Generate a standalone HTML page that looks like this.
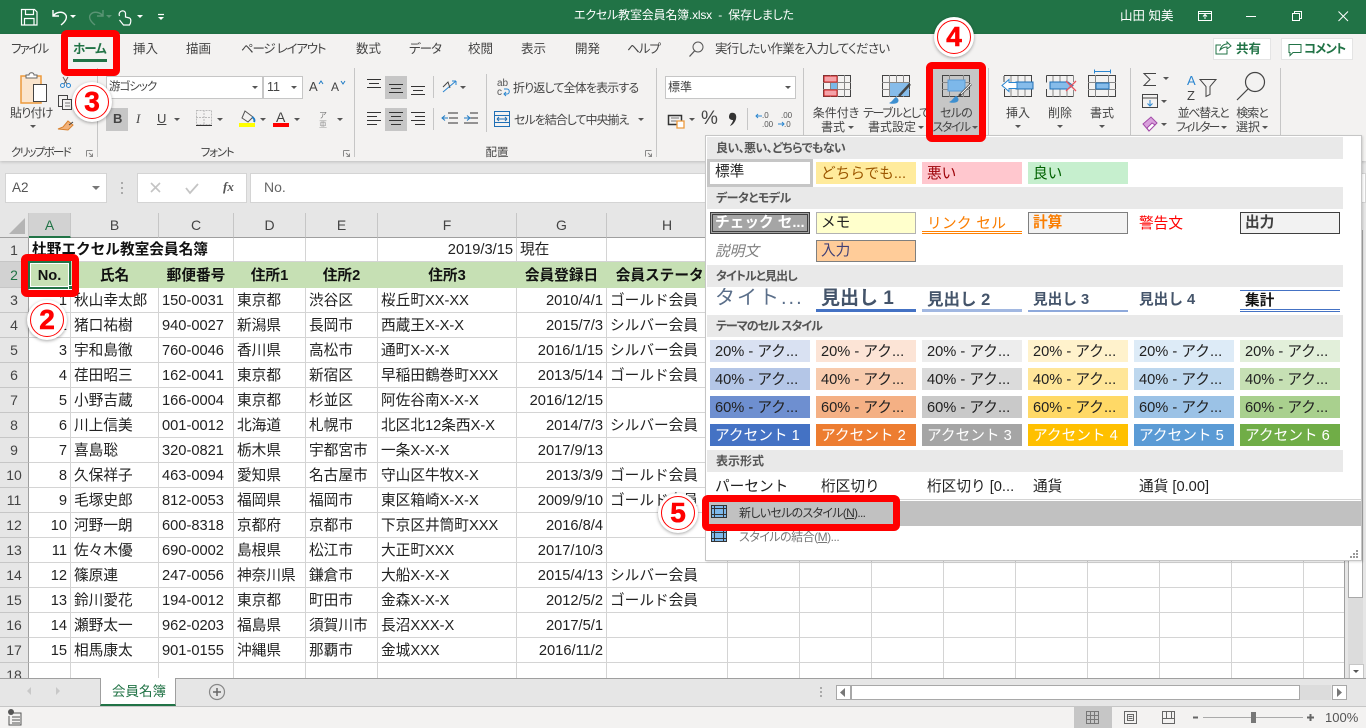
<!DOCTYPE html>
<html lang="ja"><head><meta charset="utf-8"><title>エクセル教室会員名簿.xlsx</title>
<style>
*{box-sizing:border-box}
html,body{margin:0;padding:0;width:1366px;height:728px;overflow:hidden;background:#e6e6e6}
body{position:relative;font-family:"Liberation Sans","Noto Sans CJK JP",sans-serif;color:#222}
.a{position:absolute}
.t{position:absolute;white-space:nowrap;font-size:12px;line-height:16px;color:#444;font-feature-settings:"palt"}
.c{transform:translateX(-50%)}
.arr{position:absolute;width:0;height:0;border-left:3.5px solid transparent;border-right:3.5px solid transparent;border-top:3.5px solid #555}
.sep{position:absolute;top:68px;height:89px;width:1px;background:#c6c6c6}
.s2{position:absolute;width:1px;background:#c6c6c6}
.box{position:absolute;background:#fff;border:1px solid #c6c6c6}
.gray{position:absolute;background:#c6c6c6}
#sheet{position:absolute;left:0;top:213px;width:1345px;height:465px;overflow:hidden;background:#fff}
table{border-collapse:separate;border-spacing:0;table-layout:fixed;width:1345px}
td{border-right:1px solid #d4d4d4;border-bottom:1px solid #d4d4d4;padding:2px 3px 0;font-size:14.67px;white-space:nowrap;overflow:visible;color:#222;line-height:16px}
tr:nth-child(1) td,tr:nth-child(2) td{padding-top:0}
td.h{background:#e6e6e6;border-right:1px solid #c6c6c6;border-bottom:1px solid #9f9f9f;text-align:center;color:#444;font-size:14px}
td.rh{background:#e6e6e6;border-right:1px solid #9f9f9f;border-bottom:1px solid #c6c6c6;text-align:center;color:#444;padding:0;font-size:14px}
td.n{text-align:right}
tr.g td.x{background:#c6e0b4;font-weight:bold;text-align:center;color:#111;border-color:#c6e0b4}
#pop{position:absolute;left:705px;top:135px;width:657px;height:426px;background:#fff;border:1px solid #c6c6c6;box-shadow:1px 1px 2px rgba(0,0,0,.15)}
.hd{position:absolute;left:707px;width:636px;height:22px;background:#e9e9e9;font-size:12px;font-weight:bold;color:#555;line-height:22px;padding-left:9px;font-feature-settings:"palt"}
.st{position:absolute;width:100px;height:22px;font-size:14.67px;line-height:24px;padding-left:5px;white-space:nowrap;overflow:hidden;color:#222}
.bd{line-height:20px;padding-left:4px}
.red{position:absolute;border:7px solid #f00;border-radius:6px}
.num{position:absolute;width:40px;height:40px;border-radius:50%;background:#fff;box-shadow:0 1px 3px rgba(0,0,0,.35)}
.num i{position:absolute;left:3px;top:3px;width:34px;height:34px;border-radius:50%;border:1.5px solid #f00;font:bold 28px/31px "Liberation Sans",sans-serif;color:#f00;text-align:center;-webkit-text-stroke:.6px #f00}
</style></head><body>

<!-- title bar -->
<div class="a" style="left:0;top:0;width:1366px;height:34px;background:#217346"></div>
<div class="t" style="left:574px;top:7px;color:#fff;font-size:12px;letter-spacing:-.2px">エクセル教室会員名簿.xlsx &nbsp;-&nbsp; 保存しました</div>
<div class="t" style="left:1120px;top:8px;color:#fff;font-size:12.5px">山田 知美</div>

<!-- ribbon -->
<div class="a" style="left:0;top:34px;width:1366px;height:127px;background:#f3f2f1;box-shadow:0 1px 3px rgba(0,0,0,.18)"></div>
<div class="t" style="left:11px;top:41px;font-size:12.5px;letter-spacing:-1.7px">ファイル</div>
<div class="t" style="left:73px;top:41px;font-size:12.5px;font-weight:bold;color:#217346;letter-spacing:-1px">ホーム</div>
<div class="a" style="left:73px;top:59px;width:34px;height:3px;background:#217346"></div>
<div class="t" style="left:133px;top:41px;font-size:12.5px">挿入</div>
<div class="t" style="left:186px;top:41px;font-size:12.5px">描画</div>
<div class="t" style="left:241px;top:41px;font-size:12.5px;letter-spacing:-1.2px">ページ レイアウト</div>
<div class="t" style="left:356px;top:41px;font-size:12.5px">数式</div>
<div class="t" style="left:409px;top:41px;font-size:12.5px;letter-spacing:-1px">データ</div>
<div class="t" style="left:468px;top:41px;font-size:12.5px">校閲</div>
<div class="t" style="left:521px;top:41px;font-size:12.5px">表示</div>
<div class="t" style="left:575px;top:41px;font-size:12.5px">開発</div>
<div class="t" style="left:627px;top:41px;font-size:12.5px;letter-spacing:-1px">ヘルプ</div>
<div class="t" style="left:715px;top:41px;font-size:12.5px;letter-spacing:-.75px">実行したい作業を入力してください</div>

<div class="a" style="left:1213px;top:38px;width:58px;height:22px;background:#fff;border:1px solid #e4e4e4"></div>
<div class="t" style="left:1236px;top:41px;font-size:12.5px;font-weight:bold;color:#217346">共有</div>
<div class="a" style="left:1281px;top:38px;width:72px;height:22px;background:#fff;border:1px solid #e4e4e4"></div>
<div class="t" style="left:1304px;top:41px;font-size:12.5px;font-weight:bold;color:#217346;letter-spacing:-1px">コメント</div>

<div class="sep" style="left:97px"></div><div class="sep" style="left:354px"></div><div class="sep" style="left:656px"></div><div class="sep" style="left:803px"></div><div class="sep" style="left:988px"></div><div class="sep" style="left:1130px"></div><div class="sep" style="left:1280px"></div>

<!-- clipboard -->
<div class="t" style="left:10px;top:105px;letter-spacing:-.8px">貼り付け</div><div class="arr" style="left:30px;top:125px"></div>
<div class="t" style="left:11px;top:145px;font-size:11.5px;letter-spacing:-1.7px">クリップボード</div>

<!-- font -->
<div class="box" style="left:106px;top:76px;width:157px;height:23px"></div>
<div class="t" style="left:109px;top:79px;font-size:11.5px;letter-spacing:-1px">游ゴシック</div><div class="arr" style="left:252px;top:86px"></div>
<div class="box" style="left:263px;top:76px;width:40px;height:23px"></div>
<div class="t" style="left:267px;top:79px;font-size:12.5px">11</div><div class="arr" style="left:291px;top:86px"></div>
<div class="t" style="left:309px;top:79px;font-size:13px">A</div><div class="t" style="left:331px;top:79px;font-size:12px">A</div>
<div class="gray" style="left:106px;top:108px;width:22px;height:23px"></div>
<div class="t" style="left:113px;top:111px;font-size:13px;font-weight:bold">B</div>
<div class="t" style="left:136px;top:111px;font-size:13px;font-style:italic;font-family:'Liberation Serif',serif">I</div>
<div class="t" style="left:157px;top:111px;font-size:13px;text-decoration:underline">U</div>
<div class="arr" style="left:174px;top:118px"></div><div class="arr" style="left:217px;top:118px"></div><div class="arr" style="left:260px;top:118px"></div><div class="arr" style="left:294px;top:118px"></div><div class="arr" style="left:337px;top:118px"></div>
<div class="a" style="left:239px;top:123px;width:16px;height:4px;background:#ff0"></div>
<div class="t" style="left:276px;top:109px;font-size:14px">A</div>
<div class="a" style="left:273px;top:123px;width:16px;height:4px;background:#f00"></div>
<div class="t c" style="left:217px;top:145px;font-size:11.5px;letter-spacing:-1.3px">フォント</div>

<!-- alignment -->
<div class="gray" style="left:385px;top:76px;width:22px;height:23px"></div>
<div class="gray" style="left:385px;top:108px;width:22px;height:23px"></div>
<div class="s2" style="left:433px;top:76px;height:22px"></div><div class="s2" style="left:433px;top:108px;height:22px"></div>
<div class="s2" style="left:486px;top:74px;height:58px"></div>
<div class="t" style="left:513px;top:80px;letter-spacing:-.85px">折り返して全体を表示する</div>
<div class="t" style="left:514px;top:112px;letter-spacing:-1px">セルを結合して中央揃え</div><div class="arr" style="left:638px;top:118px"></div><div class="arr" style="left:460px;top:86px"></div>
<div class="t c" style="left:497px;top:145px;font-size:11.5px">配置</div>

<!-- number -->
<div class="box" style="left:665px;top:76px;width:131px;height:23px"></div>
<div class="t" style="left:668px;top:79px">標準</div><div class="arr" style="left:785px;top:86px"></div>
<div class="arr" style="left:689px;top:118px"></div>
<div class="t" style="left:701px;top:111px;font-size:19px;line-height:16px">%</div>
<div class="s2" style="left:747px;top:108px;height:22px"></div>

<!-- styles -->
<div class="t c" style="left:836px;top:105px">条件付き</div>
<div class="t c" style="left:833px;top:119px">書式</div><div class="arr" style="left:848px;top:126px"></div>
<div class="t c" style="left:896px;top:105px;letter-spacing:-1.3px">テーブルとして</div>
<div class="t c" style="left:892px;top:119px">書式設定</div><div class="arr" style="left:918px;top:126px"></div>
<div class="gray" style="left:933px;top:69px;width:46px;height:66px"></div>
<div class="t c" style="left:956px;top:105px;letter-spacing:-.8px">セルの</div>
<div class="t c" style="left:951px;top:119px;letter-spacing:-1.5px">スタイル</div><div class="arr" style="left:972px;top:126px"></div>

<!-- cells -->
<div class="t c" style="left:1018px;top:105px">挿入</div><div class="arr" style="left:1015px;top:125px"></div>
<div class="t c" style="left:1060px;top:105px">削除</div><div class="arr" style="left:1057px;top:125px"></div>
<div class="t c" style="left:1102px;top:105px">書式</div><div class="arr" style="left:1099px;top:125px"></div>

<!-- editing -->
<div class="arr" style="left:1163px;top:77px"></div><div class="arr" style="left:1161px;top:100px"></div><div class="arr" style="left:1161px;top:123px"></div>
<div class="t c" style="left:1203px;top:105px;letter-spacing:-1.4px">並べ替えと</div>
<div class="t c" style="left:1197px;top:119px;letter-spacing:-2px">フィルター</div><div class="arr" style="left:1221px;top:126px"></div>
<div class="t c" style="left:1252px;top:105px;letter-spacing:-1px">検索と</div>
<div class="t c" style="left:1248px;top:119px">選択</div><div class="arr" style="left:1262px;top:126px"></div>

<!-- ribbon icons -->
<svg class="a" style="left:0;top:0" width="1366" height="161" viewBox="0 0 1366 161" fill="none">
 <!-- QAT -->
 <g stroke="#fff" stroke-width="1.2">
  <path d="M21.5 9.5h13l2.5 2.5v13h-15.500zM25.500 9.500v5h8v-5M24.500 25v-6.500h9.500v6.500"/>
  <path d="M53 10v6h6M53 16c3-4 9-5 12-2 3 3 1 7-4 11" stroke-width="1.400"/>
  <path d="M119.500 16c-2-5 5-7 6-3v4l4 1c2 1 1.500 5 0 7h-6l-4-5" stroke-width="1.200"/>
  <path d="M158 14.500h6" stroke-width="1.200"/>
 </g>
 <path d="M158 17h6l-3 3z" fill="#fff"/>
 <path d="M103 10v6h-6M103 16c-3-4-9-5-12-2-3 3-1 7 4 11" stroke="#5a9474" stroke-width="1.400"/>
 <path d="M70 15h6l-3 3zM137 15h6l-3 3z" fill="#fff"/>
 <path d="M106 15h6l-3 3z" fill="#5a9474"/>
 <!-- window -->
 <g stroke="#fff" stroke-width="1">
  <path d="M1198.500 11.500h13v9h-13zM1198.500 13.500h13M1205 19v-4M1203 16.500l2-2 2 2"/>
  <path d="M1246 16.500h10"/>
  <path d="M1292.500 13.500h7v7h-7zM1294.500 13.500v-2h7v7h-2"/>
  <path d="M1338.500 11.500l9.500 9.500M1348 11.500l-9.500 9.500"/>
 </g>
 <!-- tell me -->
 <circle cx="698" cy="47" r="5" stroke="#555"/><path d="M694.500 51l-5 5.500" stroke="#555" stroke-width="1.300"/>
 <!-- share/comment -->
 <path d="M1221 45h-5v9h11v-4M1220 50c1-4 4-6 7-6v-2l4 4-4 3v-2c-3 0-5 1-7 3z" stroke="#217346"/>
 <path d="M1289 44.500h12v8h-8l-3 3v-3h-1z" stroke="#217346"/>
 <!-- paste -->
 <path d="M21 76h20v27h-20z" stroke="#ed9a3c" stroke-width="1.500" fill="#fbe5cd"/>
 <path d="M26 77v-2h3c0-3 5-3 5 0h3v3h-11z" stroke="#666" fill="#fff"/>
 <path d="M33.500 84.500h13v17h-13z" stroke="#444" fill="#fff"/>
 <!-- cut/copy/painter -->
 <path d="M63 77l4 7M68 77l-4 7" stroke="#666"/><circle cx="62.500" cy="85.500" r="2" stroke="#2b86d0"/><circle cx="68.500" cy="85.500" r="2" stroke="#2b86d0"/>
 <path d="M58.500 95.500h9v11h-9z" stroke="#444"/><path d="M62.500 99.500h9v10h-9z" stroke="#444" fill="#f3f2f1"/><path d="M65 103h5M65 106h5" stroke="#777"/>
 <path d="M68 121l5 4-5 5-10-1 5-2z" fill="#f2b27a" stroke="#d9812e"/><path d="M69 125l4-3" stroke="#444"/>
 <!-- font icons -->
 <path d="M319 84l2-3 2 3M341 81l2 3 2-3" stroke="#1f7bc4"/>
 <path d="M196.500 110.500h15v14h-15z" stroke="#bbb" stroke-dasharray="2 1"/><path d="M204 110v15M196 117.500h16" stroke="#bbb" stroke-dasharray="2 1"/><path d="M196 125.500h16" stroke="#333"/>
 <path d="M245 111l-3 7 6 4 5-5z" stroke="#555"/><path d="M252 117c2 1 3 3 2 5" stroke="#1f7bc4" stroke-width="2"/>
 <text x="319" y="118" font-size="8" fill="#777" font-family="Noto Sans CJK JP">ア</text><text x="319" y="127" font-size="8" fill="#999" font-family="Noto Sans CJK JP">亜</text>
 <!-- align lines -->
 <g stroke="#333">
  <path d="M367 79.500h14M369 83.500h10M367 87.500h14"/>
  <path d="M389 84.500h14M391 88.500h10M389 92.500h14"/>
  <path d="M411 86.500h14M413 90.500h10M411 94.500h14"/>
  <path d="M367 112.500h14M367 116.500h10M367 120.500h14M367 124.500h10"/>
  <path d="M389 112.500h14M391 116.500h10M389 120.500h14M391 124.500h10"/>
  <path d="M411 112.500h14M415 116.500h10M411 120.500h14M415 124.500h10"/>
  <path d="M448 113h10M449 118h9M448 123h10"/><path d="M470 113h8M470 118h8M464 123h14"/>
 </g>
 <path d="M442 118h6M445 115.500l-3 2.500 3 2.500M464 118h5M467 115.500l3 2.500-3 2.500" stroke="#1f7bc4"/>
 <path d="M443 92l13-11M456 81v4M456 81h-4" stroke="#2b86d0"/>
 <path d="M443 87l5-5 2 6" stroke="#444"/>
 <!-- wrap/merge -->
 <text x="497" y="86" font-size="10" fill="#555" font-family="Liberation Sans">ab</text>
 <text x="497" y="95" font-size="10" fill="#555" font-family="Liberation Sans">c</text>
 <path d="M504 89h3c3 0 3 5 0 5h-3M506 92l-2 2 2 2" stroke="#2b86d0"/>
 <path d="M494.500 111.500h15v15h-15z" stroke="#1f6fb5"/><path d="M494 115.500h16M494 122.500h16" stroke="#1f6fb5"/><path d="M497 119h10M497 119l2-2M497 119l2 2M507 119l-2-2M507 119l-2 2" stroke="#1f6fb5"/>
 <!-- number icons -->
 <path d="M668.500 115.500h13v9h-13z" stroke="#333" stroke-width="1.500"/><path d="M671 118h8M671 121h8" stroke="#777"/><path d="M677 121h7v7h-7z" fill="#fff" stroke="#ed9a3c" stroke-width="1.300"/>
 <path d="M731 113c4-1 6 2 5 6-1 3-3 6-6 7 1-2 3-4 3-6-2 0-4-1-4-3 0-2 1-4 2-4z" fill="#333"/>
 <text x="762" y="118" font-size="8" fill="#555" font-family="Liberation Sans">.0</text><text x="762" y="127" font-size="8" fill="#555" font-family="Liberation Sans">.00</text>
 <path d="M756 116h6M758 114l-2 2 2 2" stroke="#2b86d0"/>
 <text x="781" y="118" font-size="8" fill="#555" font-family="Liberation Sans">.00</text><text x="784" y="127" font-size="8" fill="#555" font-family="Liberation Sans">.0</text>
 <path d="M778 124h6M782 122l2 2-2 2" stroke="#2b86d0"/>
 <!-- conditional -->
 <path d="M823.500 75.500h27v21h-27z" stroke="#444"/><path d="M823 82.500h28M823 89.500h28M830.500 75v22M837.500 75v22M844.500 75v22" stroke="#888"/>
 <path d="M824 76h13v6h-13zM824 90h13v6h-13z" fill="#f4a3a9" stroke="#d02020"/><path d="M831 83h6v6h-6z" fill="#7ab8e8"/>
 <!-- table -->
 <path d="M882.500 75.500h27v21h-27z" stroke="#444"/><path d="M882 82.500h28M882 89.500h28M889.500 75v22M896.500 75v22M903.500 75v22" stroke="#888"/>
 <path d="M890 83h19v13h-19z" fill="#86bcea"/><path d="M910 84l-11 12" stroke="#444" stroke-width="2.500"/><path d="M896 97c2 1 4 4 1 6-3 1-6 1-8 0 3-1 4-4 7-6z" fill="#3d8fd0"/>
 <!-- cell style -->
 <path d="M942.500 75.500h27v21h-27z" stroke="#444"/><path d="M942 82.500h28M942 89.500h28M949.500 75v22M963.500 75v22" stroke="#888"/>
 <path d="M948 80h17v11h-17z" fill="#7db8ea" stroke="#5b9bd5"/><path d="M971 84l-12 12" stroke="#444" stroke-width="2.500"/><path d="M971 84l-10 10" stroke="#fff"/><path d="M956 96c2 1 4 4 1 6-3 1-6 1-8 0 3-1 4-4 7-6z" fill="#3d8fd0"/>
 <!-- insert -->
 <path d="M1004.500 76v-.500h27v21h-27V89M1004 76v6" stroke="#444"/><path d="M1011 76v21M1018 76v21M1025 76v21" stroke="#888"/>
 <path d="M1016 82h17v7h-17z" fill="#86bcea" stroke="#1f6fb5"/><path d="M1002 85.500l7-6v3h8v6h-8v3z" fill="#fff" stroke="#2b86d0"/>
 <!-- delete -->
 <path d="M1046.500 75.500h27M1046.500 96.500h27M1046.500 75.500v7M1046.500 89v7.500" stroke="#444"/><path d="M1053 76v21M1060 76v21M1067 76v21M1073.500 76v6M1073.500 90v6" stroke="#888"/>
 <path d="M1050 82h18l5 3.500-5 3.500h-18z" fill="#86bcea" stroke="#1f6fb5"/><path d="M1066 81l10 10M1076 81l-10 10" stroke="#e8565f" stroke-width="1.300"/>
 <!-- format -->
 <path d="M1088.500 75.500h27v21h-27z" stroke="#444"/><path d="M1088 82.500h28M1088 89.500h28M1095.500 75v22M1108.500 75v22" stroke="#888"/>
 <path d="M1096 83h13v6h-13z" fill="#86bcea" stroke="#1f6fb5"/><path d="M1094.500 71.500h16M1094.500 69.500v4M1110.500 69.500v4" stroke="#2b86d0"/>
 <!-- sigma, fill, eraser -->
 <path d="M1156 73.500h-12l6 6-6 6h12" stroke="#444"/>
 <path d="M1142.500 94.500h15v13h-15zM1142 98h16" stroke="#444"/><path d="M1150 100v6M1147.500 103.500l2.500 2.500 2.500-2.500" stroke="#2b86d0"/>
 <path d="M1143 124l8-7 6 6-8 8z" fill="#d9a0dc" stroke="#a24aa8"/><path d="M1147 128l5-5 3 2-6 6z" fill="#fff" stroke="#a24aa8"/>
 <!-- sort filter -->
 <text x="1187" y="85" font-size="13" fill="#2b86d0" font-family="Liberation Sans">A</text>
 <text x="1187" y="100" font-size="13" fill="#444" font-family="Liberation Sans">Z</text>
 <path d="M1200 79.500h16l-6 7v8l-4 2v-10z" stroke="#444"/>
 <!-- find -->
 <circle cx="1255" cy="82" r="9.500" stroke="#444" stroke-width="1.200"/><path d="M1248 89l-11 11" stroke="#444" stroke-width="1.200"/>
 <!-- launchers -->
 <path d="M86.500 150.500h6M86.500 150.500v6M89 153l3.500 3.500M92.500 153.500v3h-3" stroke="#888"/>
 <path d="M343.500 150.500h6M343.500 150.500v6M346 153l3.500 3.500M349.500 153.500v3h-3" stroke="#888"/>
 <path d="M645.500 150.500h6M645.500 150.500v6M648 153l3.500 3.500M651.500 153.500v3h-3" stroke="#888"/>
</svg>

<!-- formula bar -->
<div class="box" style="left:5px;top:173px;width:102px;height:30px;border-color:#d4d4d4"></div>
<div class="t" style="left:12px;top:180px;font-size:13.5px;color:#555">A2</div>
<div class="arr" style="left:92px;top:186px;border-left-width:4px;border-right-width:4px;border-top-width:4px;border-top-color:#777"></div>
<div class="a" style="left:121px;top:182px;width:2px;height:2px;background:#aaa;box-shadow:0 5px #aaa,0 10px #aaa"></div>
<div class="box" style="left:137px;top:173px;width:110px;height:30px;border-color:#d4d4d4"></div>
<svg class="a" style="left:148px;top:180px" width="90" height="16" fill="none"><path d="M3 3l9 9M12 3l-9 9" stroke="#c4c4c4" stroke-width="1.600"/><path d="M38 8l4 5 8-9" stroke="#c4c4c4" stroke-width="1.800"/></svg>
<div class="t" style="left:223px;top:178px;font:italic bold 13px/18px 'Liberation Serif',serif;color:#555">fx</div>
<div class="box" style="left:250px;top:173px;width:1116px;height:30px;border-color:#d4d4d4"></div>
<div class="t" style="left:264px;top:179px;font-size:14px;color:#666">No.</div>

<!-- sheet -->
<div id="sheet">
<table>
<colgroup><col style="width:29px"><col style="width:42px"><col style="width:88px"><col style="width:75px"><col style="width:72px"><col style="width:72px"><col style="width:139px"><col style="width:90px"><col style="width:121px"><col style="width:72px"><col style="width:72px"><col style="width:72px"><col style="width:72px"><col style="width:72px"><col style="width:72px"><col style="width:72px"><col style="width:72px"><col style="width:41px"></colgroup>
<tr style="height:25px"><td class="h"></td><td class="h" style="background:#d2d2d2;color:#217346;border-bottom:2px solid #217346">A</td><td class="h">B</td><td class="h">C</td><td class="h">D</td><td class="h">E</td><td class="h">F</td><td class="h">G</td><td class="h">H</td><td class="h">I</td><td class="h">J</td><td class="h">K</td><td class="h">L</td><td class="h">M</td><td class="h">N</td><td class="h">O</td><td class="h">P</td><td class="h">Q</td></tr>
<tr style="height:24px"><td class="rh">1</td><td style="font-weight:bold;color:#111;border-right:0">杜野エクセル教室会員名簿</td><td style="border-right:0"></td><td></td><td></td><td></td><td class="n">2019/3/15</td><td>現在</td><td></td><td></td><td></td><td></td><td></td><td></td><td></td><td></td><td></td><td></td></tr>
<tr class="g" style="height:26px"><td class="rh" style="background:#d2d2d2;color:#217346">2</td><td class="x">No.</td><td class="x">氏名</td><td class="x">郵便番号</td><td class="x">住所1</td><td class="x">住所2</td><td class="x">住所3</td><td class="x">会員登録日</td><td class="x" style="overflow:hidden">会員ステータス</td><td></td><td></td><td></td><td></td><td></td><td></td><td></td><td></td><td></td></tr>
<tr style="height:25px"><td class="rh">3</td><td class="n">1</td><td>秋山幸太郎</td><td>150-0031</td><td>東京都</td><td>渋谷区</td><td>桜丘町XX-XX</td><td class="n">2010/4/1</td><td>ゴールド会員</td><td></td><td></td><td></td><td></td><td></td><td></td><td></td><td></td><td></td></tr>
<tr style="height:25px"><td class="rh">4</td><td class="n">2</td><td>猪口祐樹</td><td>940-0027</td><td>新潟県</td><td>長岡市</td><td>西蔵王X-X-X</td><td class="n">2015/7/3</td><td>シルバー会員</td><td></td><td></td><td></td><td></td><td></td><td></td><td></td><td></td><td></td></tr>
<tr style="height:25px"><td class="rh">5</td><td class="n">3</td><td>宇和島徹</td><td>760-0046</td><td>香川県</td><td>高松市</td><td>通町X-X-X</td><td class="n">2016/1/15</td><td>シルバー会員</td><td></td><td></td><td></td><td></td><td></td><td></td><td></td><td></td><td></td></tr>
<tr style="height:25px"><td class="rh">6</td><td class="n">4</td><td>荏田昭三</td><td>162-0041</td><td>東京都</td><td>新宿区</td><td>早稲田鶴巻町XXX</td><td class="n">2013/5/14</td><td>ゴールド会員</td><td></td><td></td><td></td><td></td><td></td><td></td><td></td><td></td><td></td></tr>
<tr style="height:25px"><td class="rh">7</td><td class="n">5</td><td>小野吉蔵</td><td>166-0004</td><td>東京都</td><td>杉並区</td><td>阿佐谷南X-X-X</td><td class="n">2016/12/15</td><td></td><td></td><td></td><td></td><td></td><td></td><td></td><td></td><td></td><td></td></tr>
<tr style="height:25px"><td class="rh">8</td><td class="n">6</td><td>川上信美</td><td>001-0012</td><td>北海道</td><td>札幌市</td><td>北区北12条西X-X</td><td class="n">2014/7/3</td><td>シルバー会員</td><td></td><td></td><td></td><td></td><td></td><td></td><td></td><td></td><td></td></tr>
<tr style="height:25px"><td class="rh">9</td><td class="n">7</td><td>喜島聡</td><td>320-0821</td><td>栃木県</td><td>宇都宮市</td><td>一条X-X-X</td><td class="n">2017/9/13</td><td></td><td></td><td></td><td></td><td></td><td></td><td></td><td></td><td></td><td></td></tr>
<tr style="height:25px"><td class="rh">10</td><td class="n">8</td><td>久保祥子</td><td>463-0094</td><td>愛知県</td><td>名古屋市</td><td>守山区牛牧X-X</td><td class="n">2013/3/9</td><td>ゴールド会員</td><td></td><td></td><td></td><td></td><td></td><td></td><td></td><td></td><td></td></tr>
<tr style="height:25px"><td class="rh">11</td><td class="n">9</td><td>毛塚史郎</td><td>812-0053</td><td>福岡県</td><td>福岡市</td><td>東区箱崎X-X-X</td><td class="n">2009/9/10</td><td>ゴールド会員</td><td></td><td></td><td></td><td></td><td></td><td></td><td></td><td></td><td></td></tr>
<tr style="height:25px"><td class="rh">12</td><td class="n">10</td><td>河野一朗</td><td>600-8318</td><td>京都府</td><td>京都市</td><td>下京区井筒町XXX</td><td class="n">2016/8/4</td><td></td><td></td><td></td><td></td><td></td><td></td><td></td><td></td><td></td><td></td></tr>
<tr style="height:25px"><td class="rh">13</td><td class="n">11</td><td>佐々木優</td><td>690-0002</td><td>島根県</td><td>松江市</td><td>大正町XXX</td><td class="n">2017/10/3</td><td></td><td></td><td></td><td></td><td></td><td></td><td></td><td></td><td></td><td></td></tr>
<tr style="height:25px"><td class="rh">14</td><td class="n">12</td><td>篠原連</td><td>247-0056</td><td>神奈川県</td><td>鎌倉市</td><td>大船X-X-X</td><td class="n">2015/4/13</td><td>シルバー会員</td><td></td><td></td><td></td><td></td><td></td><td></td><td></td><td></td><td></td></tr>
<tr style="height:25px"><td class="rh">15</td><td class="n">13</td><td>鈴川愛花</td><td>194-0012</td><td>東京都</td><td>町田市</td><td>金森X-X-X</td><td class="n">2012/5/2</td><td>ゴールド会員</td><td></td><td></td><td></td><td></td><td></td><td></td><td></td><td></td><td></td></tr>
<tr style="height:25px"><td class="rh">16</td><td class="n">14</td><td>瀬野太一</td><td>962-0203</td><td>福島県</td><td>須賀川市</td><td>長沼XXX-X</td><td class="n">2017/5/1</td><td></td><td></td><td></td><td></td><td></td><td></td><td></td><td></td><td></td><td></td></tr>
<tr style="height:25px"><td class="rh">17</td><td class="n">15</td><td>相馬康太</td><td>901-0155</td><td>沖縄県</td><td>那覇市</td><td>金城XXX</td><td class="n">2016/11/2</td><td></td><td></td><td></td><td></td><td></td><td></td><td></td><td></td><td></td><td></td></tr>
<tr style="height:25px"><td class="rh">18</td><td></td><td></td><td></td><td></td><td></td><td></td><td></td><td></td><td></td><td></td><td></td><td></td><td></td><td></td><td></td><td></td><td></td></tr>
</table>
</div>
<svg class="a" style="left:8px;top:217px" width="18" height="18"><path d="M17 1v16H1z" fill="#b4b4b4"/></svg>
<div class="a" style="left:28px;top:261px;width:43px;height:28px;border:2px solid #217346;outline:1px solid #fff;outline-offset:-3px"></div>
<div class="a" style="left:68px;top:285px;width:5px;height:5px;background:#217346;border:1px solid #fff"></div>

<!-- right scrollbar -->
<div class="a" style="left:1344px;top:213px;width:1px;height:466px;background:#9f9f9f"></div>
<div class="a" style="left:1345px;top:213px;width:21px;height:465px;background:#e6e6e6"></div>
<div class="a" style="left:1348px;top:230px;width:15px;height:448px;background:#dcdcdc"></div>
<div class="a" style="left:1348px;top:230px;width:15px;height:368px;background:#fff;border:1px solid #a8a8a8"></div>
<div class="a" style="left:1349px;top:664px;width:15px;height:15px;background:#fff;border:1px solid #c6c6c6"></div>
<div class="arr" style="left:1353px;top:670px"></div>

<!-- sheet tabs -->
<div class="a" style="left:0;top:678px;width:1366px;height:29px;background:#e6e6e6;border-top:1px solid #9f9f9f;border-bottom:1px solid #c6c6c6"></div>
<div class="a" style="left:100px;top:678px;width:76px;height:28px;background:#fff;border:1px solid #9f9f9f;border-top:0;border-bottom:2px solid #217346"></div>
<div class="t" style="left:112px;top:684px;font-size:13.500px;color:#217346">会員名簿</div>
<svg class="a" style="left:0;top:678px" width="240" height="28" fill="none"><path d="M31 9v8l-4-4zM56 9v8l4-4z" fill="#c8c8c8"/><circle cx="217" cy="14" r="7.500" stroke="#888" stroke-width="1.200"/><path d="M213 14h8M217 10v8" stroke="#666" stroke-width="1.500"/></svg>
<div class="a" style="left:820px;top:687px;width:2px;height:2px;background:#aaa;box-shadow:0 4px #aaa,0 8px #aaa"></div>
<div class="a" style="left:836px;top:685px;width:15px;height:15px;background:#fff;border:1px solid #a8a8a8"></div>
<svg class="a" style="left:836px;top:685px" width="15" height="15"><path d="M9 3v9l-5-4.500z" fill="#777"/></svg>
<div class="a" style="left:851px;top:685px;width:449px;height:15px;background:#fff;border:1px solid #a8a8a8"></div>
<div class="a" style="left:1300px;top:685px;width:31px;height:15px;background:#dcdcdc"></div>
<div class="a" style="left:1332px;top:685px;width:15px;height:15px;background:#fff;border:1px solid #a8a8a8"></div>
<svg class="a" style="left:1332px;top:685px" width="15" height="15"><path d="M5 3v9l5-4.500z" fill="#777"/></svg>

<!-- status bar -->
<div class="a" style="left:0;top:707px;width:1366px;height:21px;background:#f3f2f1"></div>
<div class="a" style="left:1074px;top:707px;width:38px;height:21px;background:#c6c6c6"></div>
<svg class="a" style="left:0;top:707px" width="1366" height="21" fill="none">
 <path d="M12 6h9v12h-12v-9" stroke="#555"/><circle cx="11" cy="5" r="3" fill="#555"/><path d="M12 10h8M12 13h8M12 16h8" stroke="#555"/>
 <path d="M1086.500 4.500h12v12h-12zM1090.500 4v13M1094.500 4v13M1086 8.500h13M1086 12.500h13" stroke="#777"/>
 <path d="M1124.500 4.500h12v12h-12z" stroke="#666"/><path d="M1127.500 7.500h6v6h-6zM1128.500 9.500h4M1128.500 11.500h4" stroke="#666"/>
 <path d="M1162.500 4.500h12v12h-12zM1166.500 4.500v7h5v-7M1162.500 11.500h12" stroke="#666"/>
 <path d="M1193 10.500h5" stroke="#666" stroke-width="2"/>
 <path d="M1203 10.500h100" stroke="#aaa"/>
 <path d="M1251 5h5v11h-5z" fill="#777"/>
 <path d="M1307 10.500h7M1310.500 7v7" stroke="#666" stroke-width="2"/>
</svg>
<div class="t" style="left:1325px;top:710px;font-size:13px;color:#555;font-feature-settings:normal">100%</div>

<!-- gallery popup -->
<div id="pop"></div>
<div class="hd" style="top:137px;letter-spacing:-.6px">良い、悪い、どちらでもない</div>
<div class="hd" style="top:187px;letter-spacing:-.5px">データとモデル</div>
<div class="hd" style="top:265px;letter-spacing:-.9px">タイトルと見出し</div>
<div class="hd" style="top:315px;letter-spacing:-1px">テーマのセル スタイル</div>
<div class="hd" style="top:450px">表示形式</div>

<div class="st bd" style="left:707px;top:159px;width:106px;height:28px;border:3px solid #c6c6c6;background:#fff;padding-left:5px">標準</div>
<div class="st" style="left:816px;top:162px;background:#ffeb9c;color:#9c5700">どちらでも...</div>
<div class="st" style="left:922px;top:162px;background:#ffc7ce;color:#9c0006">悪い</div>
<div class="st" style="left:1028px;top:162px;background:#c6efce;color:#006100">良い</div>

<div class="st bd" style="left:710px;top:212px;background:#a5a5a5;border:1px solid #3f3f3f;color:#fff;font-weight:bold;box-shadow:inset 0 0 0 1px #a5a5a5,inset 0 0 0 2px #3f3f3f">チェック セ...</div>
<div class="st bd" style="left:816px;top:212px;background:#ffc;border:1px solid #b2b2b2">メモ</div>
<div class="st" style="left:922px;top:212px;color:#fa7d00;border-bottom:3px double #ff8001;letter-spacing:.3px">リンク セル</div>
<div class="st bd" style="left:1028px;top:212px;background:#f2f2f2;border:1px solid #7f7f7f;color:#fa7d00;font-weight:bold">計算</div>
<div class="st" style="left:1134px;top:212px;color:#f00">警告文</div>
<div class="st bd" style="left:1240px;top:212px;background:#f2f2f2;border:1px solid #3f3f3f;color:#3f3f3f;font-weight:bold">出力</div>
<div class="st" style="left:710px;top:240px;color:#7f7f7f;font-style:italic">説明文</div>
<div class="st bd" style="left:816px;top:240px;background:#fc9;border:1px solid #7f7f7f;color:#3f3f76">入力</div>

<div class="st" style="left:710px;top:288px;color:#5b6f8a;font-size:20px;letter-spacing:2px;line-height:21px;height:24px">タイト...</div>
<div class="st" style="left:816px;top:288px;height:24px;color:#44546a;font-weight:bold;font-size:19px;line-height:22px;border-bottom:3px solid #4472c4">見出し 1</div>
<div class="st" style="left:922px;top:288px;height:24px;color:#44546a;font-weight:bold;font-size:16.500px;line-height:24px;border-bottom:3px solid #a2b8e1">見出し 2</div>
<div class="st" style="left:1028px;top:288px;height:24px;color:#44546a;font-weight:bold;font-size:14.670px;line-height:25px;border-bottom:2px solid #8ea9db">見出し 3</div>
<div class="st" style="left:1134px;top:288px;height:24px;color:#44546a;font-weight:bold;font-size:14.670px;line-height:24px">見出し 4</div>
<div class="st" style="left:1240px;top:290px;color:#111;font-weight:bold;border-top:1px solid #4472c4;border-bottom:3px double #4472c4;line-height:20px">集計</div>

<div class="st" style="left:710px;top:340px;background:#d9e1f2">20% - アク...</div><div class="st" style="left:816px;top:340px;background:#fce4d6">20% - アク...</div><div class="st" style="left:922px;top:340px;background:#ededed">20% - アク...</div><div class="st" style="left:1028px;top:340px;background:#fff2cc">20% - アク...</div><div class="st" style="left:1134px;top:340px;background:#ddebf7">20% - アク...</div><div class="st" style="left:1240px;top:340px;background:#e2efda">20% - アク...</div>
<div class="st" style="left:710px;top:368px;background:#b4c6e7">40% - アク...</div><div class="st" style="left:816px;top:368px;background:#f8cbad">40% - アク...</div><div class="st" style="left:922px;top:368px;background:#dbdbdb">40% - アク...</div><div class="st" style="left:1028px;top:368px;background:#ffe699">40% - アク...</div><div class="st" style="left:1134px;top:368px;background:#bdd7ee">40% - アク...</div><div class="st" style="left:1240px;top:368px;background:#c6e0b4">40% - アク...</div>
<div class="st" style="left:710px;top:396px;background:#8ea9db;background:#6e8fd0">60% - アク...</div><div class="st" style="left:816px;top:396px;background:#f4b084">60% - アク...</div><div class="st" style="left:922px;top:396px;background:#c9c9c9">60% - アク...</div><div class="st" style="left:1028px;top:396px;background:#ffd966">60% - アク...</div><div class="st" style="left:1134px;top:396px;background:#9bc2e6">60% - アク...</div><div class="st" style="left:1240px;top:396px;background:#a9d08e">60% - アク...</div>
<div class="st" style="left:710px;top:424px;background:#4472c4;color:#fff">アクセント 1</div><div class="st" style="left:816px;top:424px;background:#ed7d31;color:#fff">アクセント 2</div><div class="st" style="left:922px;top:424px;background:#a5a5a5;color:#fff">アクセント 3</div><div class="st" style="left:1028px;top:424px;background:#ffc000;color:#fff">アクセント 4</div><div class="st" style="left:1134px;top:424px;background:#5b9bd5;color:#fff">アクセント 5</div><div class="st" style="left:1240px;top:424px;background:#70ad47;color:#fff">アクセント 6</div>

<div class="st" style="left:710px;top:475px">パーセント</div><div class="st" style="left:816px;top:475px">桁区切り</div><div class="st" style="left:922px;top:475px">桁区切り [0...</div><div class="st" style="left:1028px;top:475px">通貨</div><div class="st" style="left:1134px;top:475px">通貨 [0.00]</div>

<div class="a" style="left:706px;top:499px;width:655px;height:1px;background:#d4d4d4"></div>
<div class="a" style="left:706px;top:501px;width:655px;height:25px;background:#c1c1c1"></div>
<div class="t" style="left:739px;top:505px;color:#333;letter-spacing:-.7px">新しいセルのスタイル(<u>N</u>)...</div>
<div class="t" style="left:739px;top:529px;color:#777;letter-spacing:-.5px">スタイルの結合(<u>M</u>)...</div>
<svg class="a" style="left:706px;top:500px" width="30" height="50" fill="none">
 <path d="M5 6h15v11H5z" fill="#7db8ea"/><path d="M5.500 5.500h15v12h-15zM8.500 5v13M17.500 5v13M5 8.500h16M5 14.500h16" stroke="#333"/>
 <path d="M5 30h15v11H5z" fill="#7db8ea"/><path d="M5.500 29.500h15v12h-15zM8.500 29v13M17.500 29v13M5 32.500h16M5 38.500h16" stroke="#333"/>
</svg>
<svg class="a" style="left:1350px;top:549px" width="10" height="10"><path d="M6 1h2v2H6zM3 4h2v2H3zM6 4h2v2H6zM0 7h2v2H0zM3 7h2v2H3zM6 7h2v2H6z" fill="#999"/></svg>

<!-- annotations -->
<div class="red" style="left:61px;top:30px;width:59px;height:46px"></div>
<div class="red" style="left:21px;top:254px;width:58px;height:43px"></div>
<div class="red" style="left:926px;top:62px;width:60px;height:80px"></div>
<div class="red" style="left:702px;top:495px;width:198px;height:36px"></div>
<div class="num" style="left:72px;top:82px"><i>3</i></div>
<div class="num" style="left:934px;top:17px"><i>4</i></div>
<div class="num" style="left:27px;top:300px"><i>2</i></div>
<div class="num" style="left:658px;top:493px"><i>5</i></div>
</body></html>
